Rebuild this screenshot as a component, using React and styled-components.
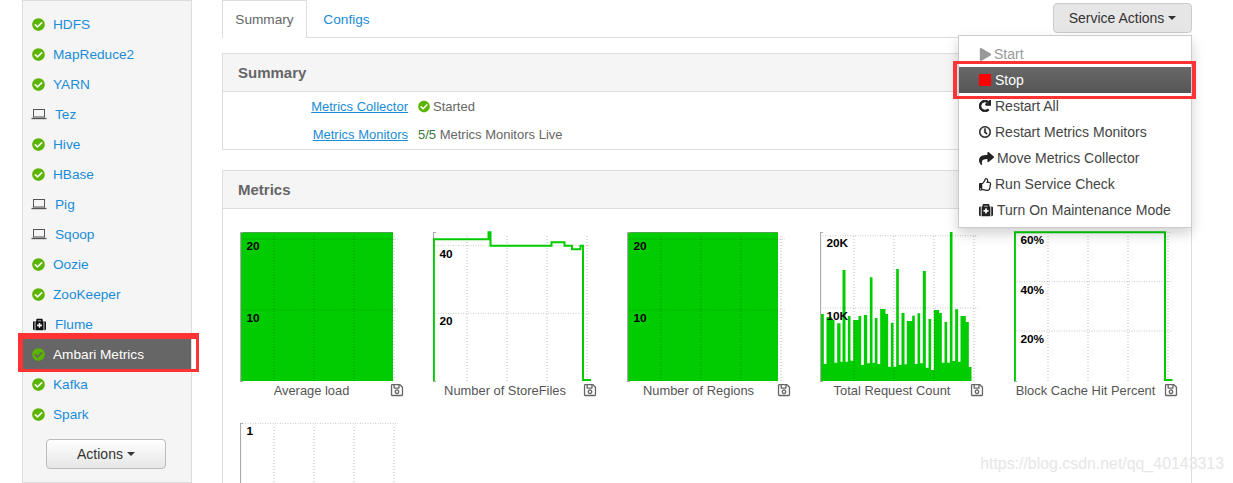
import styled, { createGlobalStyle } from "styled-components";
import {
  FaCheckCircle,
  FaMedkit,
  FaPlay,
  FaRedo,
  FaRegClock,
  FaShare,
  FaRegThumbsUp,
  FaRegSave,
} from "react-icons/fa";

const GlobalStyle = createGlobalStyle`
  html, body {
    margin: 0;
    padding: 0;
    background: #fff;
    font-family: "Liberation Sans", Arial, sans-serif;
    font-size: 13.65px;
    color: #666;
  }
`;

const Page = styled.div`
  position: relative;
  display: flex;
  gap: 30px;
  width: 1233px;
  height: 483px;
  padding-left: 22px;
  box-sizing: border-box;
  overflow: hidden;
`;

const Sidebar = styled.aside`
  position: relative;
  flex: none;
  width: 170px;
  height: 483px;
  box-sizing: border-box;
  padding-top: 8px;
  background: #f5f5f5;
  border: 1px solid #ddd;
`;

const ServiceRow = styled.div`
  display: flex;
  align-items: center;
  height: 30px;
  padding-left: ${(p) => (p.$wide ? "8px" : "9px")};
  background: ${(p) => (p.$active ? "#666" : "transparent")};
  color: ${(p) => (p.$active ? "#fff" : "#1a8cd8")};
`;

const IconSlot = styled.span`
  display: flex;
  align-items: center;
  justify-content: center;
  flex: none;
  width: ${(p) => (p.$wide ? "16px" : "13px")};
  margin-right: 8px;
  color: ${(p) => p.$color || "#5ab400"};
  font-size: 13px;
`;

const StatusIcon = styled(IconSlot)`
  width: 12px;
  margin-right: 0;
`;

const ActionsButton = styled.button`
  display: flex;
  align-items: center;
  justify-content: center;
  gap: 4px;
  width: 120px;
  height: 30px;
  margin: 10px 0 0 23px;
  padding: 0;
  border: 1px solid #bbb;
  border-radius: 4px;
  background: linear-gradient(#fff, #e6e6e6);
  color: #333;
  font: inherit;
  font-size: 14px;
`;

const Caret = styled.span`
  width: 0;
  height: 0;
  border-left: 4px solid transparent;
  border-right: 4px solid transparent;
  border-top: 4px solid #333;
`;

const Main = styled.main`
  position: relative;
  flex: none;
  width: 970px;
`;

const TabBar = styled.div`
  display: flex;
  justify-content: space-between;
  height: 38px;
  box-sizing: border-box;
  border-bottom: 1px solid #ddd;
`;

const Tabs = styled.div`
  display: flex;
`;

const Tab = styled.div`
  display: flex;
  align-items: center;
  justify-content: center;
  width: ${(p) => (p.$active ? "85px" : "79px")};
  height: ${(p) => (p.$active ? "38px" : "37px")};
  box-sizing: border-box;
  padding-bottom: ${(p) => (p.$active ? "1px" : "0")};
  border: 1px solid ${(p) => (p.$active ? "#ddd" : "transparent")};
  border-bottom: none;
  background: ${(p) => (p.$active ? "#fff" : "transparent")};
  color: ${(p) => (p.$active ? "#666" : "#1a8cd8")};
`;

const ServiceButton = styled.button`
  display: flex;
  align-items: center;
  justify-content: center;
  gap: 4px;
  width: 139px;
  height: 30px;
  margin-top: 3px;
  padding: 0;
  border: 1px solid #ccc;
  border-radius: 4px;
  background: #e6e6e6;
  color: #333;
  font: inherit;
  font-size: 14px;
`;

const Panel = styled.section`
  margin-top: ${(p) => p.$top}px;
  border: 1px solid #ddd;
  box-sizing: border-box;
`;

const PanelHeading = styled.h4`
  display: flex;
  align-items: center;
  height: 38px;
  margin: 0;
  padding-left: 15px;
  box-sizing: border-box;
  background: #f5f5f5;
  border-bottom: 1px solid #ddd;
  color: #666;
  font-size: 15px;
  font-weight: bold;
`;

const SummaryBody = styled.div`
  padding-bottom: 1px;
  font-size: 13px;
`;

const SummaryRow = styled.div`
  display: flex;
  align-items: center;
  gap: 10px;
  height: 28px;
`;

const SummaryLink = styled.a`
  width: 185px;
  text-align: right;
  color: #1a8cd8;
  text-decoration: underline;
`;

const SummaryValue = styled.div`
  display: flex;
  align-items: center;
  gap: 3px;
`;

const LiveCount = styled.span`
  color: #3c763d;
`;

const ChartGrid = styled.div`
  display: grid;
  grid-template-columns: repeat(5, 193.5px);
  grid-auto-rows: 191px;
  padding: 21px 0 0 16.5px;
`;

const ChartCell = styled.div`
  display: flex;
  flex-direction: column;
`;

const ChartSvg = styled.svg`
  display: block;
  flex: none;
`;

const AxisText = styled.text`
  font-size: 11.8px;
  font-weight: bold;
  fill: #000;
  dominant-baseline: central;
`;

const ChartFoot = styled.div`
  display: flex;
  align-items: center;
  height: 18px;
  margin-top: -9px;
  font-size: 12.9px;
  color: #555;
`;

const ChartName = styled.span`
  width: 144px;
  text-align: center;
  white-space: nowrap;
`;

const SaveIcon = styled.span`
  display: flex;
  margin-left: 6px;
  color: #666;
  font-size: 14px;
`;

const Menu = styled.ul`
  position: absolute;
  top: 35px;
  left: 736px;
  width: 234px;
  height: 193px;
  margin: 0;
  padding: 5px 0 0;
  box-sizing: border-box;
  list-style: none;
  background: #fff;
  border: 1px solid #ccc;
  box-shadow: 0 6px 12px rgba(0, 0, 0, 0.175);
  font-size: 14px;
`;

const MenuItem = styled.li`
  display: flex;
  align-items: center;
  height: 26px;
  padding-left: 20px;
  color: ${(p) => (p.$active ? "#fff" : p.$disabled ? "#999" : "#444")};
  background: ${(p) =>
    p.$active ? "linear-gradient(#686868, #555)" : "transparent"};
`;

const MenuIcon = styled.span`
  display: flex;
  align-items: center;
  flex: none;
  width: ${(p) => p.$width || 16}px;
  color: ${(p) => (p.$disabled ? "#999" : "#222")};
  font-size: ${(p) => p.$size || 13}px;
`;

const StopSquare = styled.span`
  width: 12px;
  height: 12px;
  background: #f00;
`;

const Highlight = styled.div`
  position: absolute;
  box-sizing: border-box;
  border: solid #f33;
  pointer-events: none;
`;

const SidebarHighlight = styled(Highlight)`
  left: 18px;
  top: 333px;
  width: 181px;
  height: 39px;
  border-width: 6px 3px 3px 5px;
`;

const MenuHighlight = styled(Highlight)`
  left: 953px;
  top: 61px;
  width: 243px;
  height: 38px;
  border-width: 3px 4px 3px 4px;
`;

const Watermark = styled.div`
  position: absolute;
  right: 9px;
  top: 455px;
  color: #e6e6e6;
  font-size: 15.9px;
  white-space: nowrap;
`;

function LaptopIcon() {
  return (
    <svg width="16" height="12" viewBox="0 0 16 12">
      <rect x="2.5" y="1.5" width="11" height="7.5" fill="none" stroke="#555" />
      <path d="M0.5 10.5H15.5" stroke="#555" strokeWidth="1.4" />
    </svg>
  );
}

const services = [
  { name: "HDFS" },
  { name: "MapReduce2" },
  { name: "YARN" },
  { name: "Tez", icon: "laptop" },
  { name: "Hive" },
  { name: "HBase" },
  { name: "Pig", icon: "laptop" },
  { name: "Sqoop", icon: "laptop" },
  { name: "Oozie" },
  { name: "ZooKeeper" },
  { name: "Flume", icon: "medkit" },
  { name: "Ambari Metrics", active: true },
  { name: "Kafka" },
  { name: "Spark" },
];

// tops of the request count bars, as [x, y] inside the chart
const requestBars = [
  [630, 282], [640, 432], [648, 291], [664, 300], [672, 428], [680, 310], [690, 425],
  [696, 150], [705, 425], [712, 288], [720, 422], [728, 300], [744, 288], [752, 435],
  [760, 285], [770, 430], [778, 172], [786, 428], [793, 294], [801, 432], [809, 267],
  [825, 282], [833, 440], [841, 308], [849, 440], [857, 147], [865, 435], [873, 279],
  [882, 433], [889, 303], [905, 287], [913, 432], [921, 280], [929, 430], [937, 153],
  [946, 443], [954, 297], [962, 450], [970, 270], [986, 279], [994, 428], [1002, 306],
  [1010, 428], [1018, 36], [1026, 423], [1034, 268], [1043, 425], [1050, 288], [1066, 306],
  [1075, 441],
].map(([x, y]) => [(x - 630) / 3, y / 3 - 10]);

function barsPath() {
  let d = "M0.5 151";
  requestBars.forEach(([x, y], i) => {
    const next = i + 1 < requestBars.length ? requestBars[i + 1][0] : 151;
    d += ` L${x + 0.5} ${y} L${next + 0.5} ${y}`;
  });
  return d + " L151.5 151 Z";
}

const charts = [
  {
    name: "Average load",
    lines: [9, 80],
    labels: [["20", 16], ["10", 88]],
    fill: "M1 2H153V151H1Z",
    cap: "M1 2.5H153",
  },
  {
    name: "Number of StoreFiles",
    lines: [15.7, 83.3],
    labels: [["40", 24], ["20", 91]],
    line: "M0.9 151V9.3H55.5V2.3H57.5V15.7H118.5V12.3H131.5V15.7H139V19.3H147.5V15.7H150V150H158",
  },
  {
    name: "Number of Regions",
    lines: [9, 80],
    labels: [["20", 16], ["10", 88]],
    fill: "M1 2H151V151H1Z",
    cap: "M1 2.5H151",
  },
  {
    name: "Total Request Count",
    lines: [5.7, 78],
    labels: [["20K", 13], ["10K", 86]],
    fill: barsPath(),
  },
  {
    name: "Block Cache Hit Percent",
    lines: [2.3, 51.7, 101],
    labels: [["60%", 10], ["40%", 60], ["20%", 108.7]],
    line: "M0.9 151V2.3H151V150H158.5",
  },
  {
    name: "",
    lines: [2.3],
    labels: [["1", 10]],
  },
];

function Chart({ chart }) {
  return (
    <ChartCell>
      <ChartSvg width="170" height="160" viewBox="0 0 170 160">
        {chart.fill && <path d={chart.fill} fill="#00cc00" />}
        {chart.cap && <path d={chart.cap} stroke="#4aa84a" strokeWidth="1" />}
        {[34, 74, 114, 154].map((x) => (
          <line
            key={x}
            x1={x}
            x2={x}
            y1="6"
            y2="152"
            stroke="rgba(0,0,0,0.27)"
            strokeDasharray="1 2"
          />
        ))}
        {chart.lines.map((y) => (
          <line
            key={y}
            x1="0"
            x2="158"
            y1={y}
            y2={y}
            stroke="rgba(0,0,0,0.22)"
            strokeDasharray="1 1.5"
          />
        ))}
        <path d="M3 2.5H0.5V151.5H3" fill="none" stroke="#aaa" strokeWidth="1.2" />
        {chart.line && (
          <path d={chart.line} fill="none" stroke="#00cc00" strokeWidth="2" />
        )}
        {chart.labels.map(([text, y]) => (
          <AxisText key={text} x="6.5" y={y}>
            {text}
          </AxisText>
        ))}
      </ChartSvg>
      {chart.name && (
        <ChartFoot>
          <ChartName>{chart.name}</ChartName>
          <SaveIcon>
            <FaRegSave />
          </SaveIcon>
        </ChartFoot>
      )}
    </ChartCell>
  );
}

export default function App() {
  return (
    <Page>
      <GlobalStyle />
      <Sidebar>
        {services.map((s) => (
          <ServiceRow key={s.name} $active={s.active} $wide={s.icon}>
            <IconSlot $wide={s.icon} $color={s.icon === "medkit" ? "#111" : undefined}>
              {s.icon === "laptop" && <LaptopIcon />}
              {s.icon === "medkit" && <FaMedkit />}
              {!s.icon && <FaCheckCircle />}
            </IconSlot>
            {s.name}
          </ServiceRow>
        ))}
        <ActionsButton>
          Actions <Caret />
        </ActionsButton>
      </Sidebar>

      <Main>
        <TabBar>
          <Tabs>
            <Tab $active>Summary</Tab>
            <Tab>Configs</Tab>
          </Tabs>
          <ServiceButton>
            Service Actions <Caret />
          </ServiceButton>
        </TabBar>

        <Panel $top={15}>
          <PanelHeading>Summary</PanelHeading>
          <SummaryBody>
            <SummaryRow>
              <SummaryLink>Metrics Collector</SummaryLink>
              <SummaryValue>
                <StatusIcon>
                  <FaCheckCircle />
                </StatusIcon>
                Started
              </SummaryValue>
            </SummaryRow>
            <SummaryRow>
              <SummaryLink>Metrics Monitors</SummaryLink>
              <SummaryValue>
                <span>
                  <LiveCount>5/5</LiveCount> Metrics Monitors Live
                </span>
              </SummaryValue>
            </SummaryRow>
          </SummaryBody>
        </Panel>

        <Panel $top={20}>
          <PanelHeading>Metrics</PanelHeading>
          <ChartGrid>
            {charts.map((c, i) => (
              <Chart key={i} chart={c} />
            ))}
          </ChartGrid>
        </Panel>

        <Menu>
          <MenuItem $disabled>
            <MenuIcon $disabled $width={15}><FaPlay /></MenuIcon>Start
          </MenuItem>
          <MenuItem $active>
            <MenuIcon><StopSquare /></MenuIcon>Stop
          </MenuItem>
          <MenuItem>
            <MenuIcon $size={12}><FaRedo stroke="currentColor" strokeWidth="40" /></MenuIcon>Restart All
          </MenuItem>
          <MenuItem>
            <MenuIcon $size={12}><FaRegClock stroke="currentColor" strokeWidth="20" /></MenuIcon>Restart Metrics Monitors
          </MenuItem>
          <MenuItem>
            <MenuIcon $width={18} $size={15}><FaShare /></MenuIcon>Move Metrics Collector
          </MenuItem>
          <MenuItem>
            <MenuIcon $size={13}><FaRegThumbsUp /></MenuIcon>Run Service Check
          </MenuItem>
          <MenuItem>
            <MenuIcon $width={18} $size={14}><FaMedkit /></MenuIcon>Turn On Maintenance Mode
          </MenuItem>
        </Menu>
      </Main>

      <SidebarHighlight />
      <MenuHighlight />
      <Watermark>https://blog.csdn.net/qq_40143313</Watermark>
    </Page>
  );
}
